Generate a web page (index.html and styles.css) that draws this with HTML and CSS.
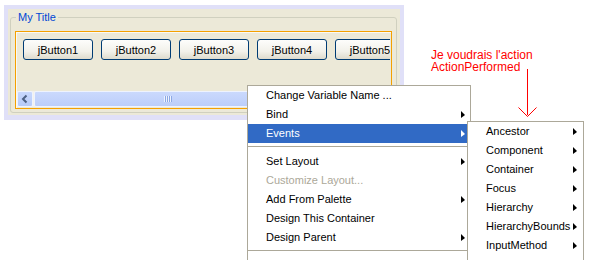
FILE: index.html
```html
<!DOCTYPE html>
<html lang="fr">
  <head>
    <meta charset="UTF-8" />
    <title>Events</title>
    <link rel="stylesheet" href="styles.css">
  </head>
  <body>
    <div class="frame">
      <fieldset class="group">
        <legend>My Title</legend>
        <div class="pane">
          <div class="buttons">
            <button>jButton1</button>
            <button>jButton2</button>
            <button>jButton3</button>
            <button>jButton4</button>
            <button>jButton5</button>
          </div>
          <div class="hscroll">
            <span class="arrow-btn">
              <svg width="14" height="14" viewBox="0 0 14 14"><path d="M8.5 3.5 L5 7 L8.5 10.5" fill="none" stroke="#4d6185" stroke-width="2"/></svg>
            </span>
            <span class="thumb"><span class="grip"></span></span>
          </div>
        </div>
      </fieldset>
    </div>

    <ul class="menu">
      <li>Change Variable Name ...</li>
      <li class="sub">Bind</li>
      <li class="sub active">Events</li>
      <li class="sep"></li>
      <li class="sub">Set Layout</li>
      <li class="disabled">Customize Layout...</li>
      <li class="sub">Add From Palette</li>
      <li>Design This Container</li>
      <li class="sub">Design Parent</li>
      <li class="sep"></li>
    </ul>

    <ul class="menu submenu">
      <li class="sub">Ancestor</li>
      <li class="sub">Component</li>
      <li class="sub">Container</li>
      <li class="sub">Focus</li>
      <li class="sub">Hierarchy</li>
      <li class="sub">HierarchyBounds</li>
      <li class="sub">InputMethod</li>
    </ul>

    <div class="note">
      <p>Je voudrais l'action</p>
      <p>ActionPerformed</p>
    </div>
    <svg class="note-arrow" width="26" height="56" viewBox="0 0 26 56">
      <path d="M12.5 3 V49 M3.5 41.5 L12.5 50.5 L21.5 41.5" fill="none" stroke="#ff0000" stroke-width="1"/>
    </svg>
  </body>
</html>
```

FILE: styles.css
```css
* {
  margin: 0;
  padding: 0;
  box-sizing: border-box;
}
html {
  overflow: hidden;
}
body {
  background: #fff;
  font-family: "Liberation Sans", Arial, sans-serif;
  font-size: 11px;
  width: 590px;
  height: 260px;
  overflow: hidden;
  position: relative;
}
.frame {
  margin: 5px 0 0 4px;
  width: 400px;
  height: 115px;
  background: #ece9d8;
  border: 4px solid #e0e0f8;
  border-bottom-width: 5px;
  padding: 2px 0 0 2px;
}
.group {
  width: 387px;
  height: 102px;
  border: 1px solid #d0d0bf;
  border-radius: 3px;
  padding: 0 4px 0 4px;
}
.group legend {
  color: #0046d5;
  margin-left: 1px;
  padding: 0 2px;
  line-height: 13px;
}
.pane {
  margin-top: 7px;
  width: 377px;
  height: 78px;
  border: 1px solid #f4a000;
  box-shadow: inset 1px 1px 0 #fbfaf4;
  padding: 7px 1px 1px 1px;
  display: flex;
  flex-direction: column;
  justify-content: space-between;
}
.buttons {
  display: flex;
  gap: 8px;
  padding-left: 6px;
  overflow: hidden;
}
.buttons button {
  flex: none;
  width: 70px;
  height: 21px;
  border: 1px solid #003c74;
  border-radius: 3px;
  background: linear-gradient(#fdfdfb, #f2f1ea 60%, #dedbcd);
  font-family: "Liberation Sans", Arial, sans-serif;
  font-size: 11px;
  color: #000;
}
.hscroll {
  height: 16px;
  display: flex;
  background: #f3f1ec;
}
.arrow-btn {
  width: 16px;
  height: 16px;
  background: linear-gradient(#c8d8fd, #b7cbf9);
  border: 1px solid #eef3fe;
  border-radius: 2px;
  display: flex;
  align-items: center;
  justify-content: center;
}
.thumb {
  width: 268px;
  height: 16px;
  margin-left: 1px;
  background: linear-gradient(#cad9fd, #bccefa);
  border: 1px solid #eef3fe;
  border-radius: 2px;
  display: flex;
  align-items: center;
  justify-content: center;
}
.grip {
  width: 8px;
  height: 6px;
  background: repeating-linear-gradient(90deg, #eef3fe 0 1px, #8ca8e4 1px 2px);
}
.menu {
  list-style: none;
  position: absolute;
  left: 247px;
  top: 85px;
  width: 224px;
  height: 175px;
  background: #fff;
  border: 1px solid #aca899;
  border-bottom: none;
  z-index: 2;
}
.menu li {
  height: 19px;
  line-height: 19px;
  padding-left: 18px;
  color: #000;
  position: relative;
}
.menu li.sub::after {
  content: "";
  position: absolute;
  right: 5px;
  top: 6px;
  border-left: 4px solid #000;
  border-top: 4px solid transparent;
  border-bottom: 3px solid transparent;
}
.menu li.active {
  background: #316ac5;
  color: #fff;
}
.menu li.active::after {
  border-left-color: #fff;
}
.menu li.disabled {
  color: #aca899;
}
.menu li.sep {
  padding: 0;
  border-top: 1px solid #aca899;
  margin-top: 3px;
  height: 6px;
}
.submenu {
  left: 467px;
  top: 121px;
  width: 117px;
  height: 139px;
  z-index: 3;
}
.submenu li.sub::after {
  right: 6px;
}
.note {
  position: absolute;
  left: 431px;
  top: 50px;
  font-family: "Liberation Sans", Arial, sans-serif;
  font-size: 12px;
  line-height: 11px;
  color: #ff0000;
  display: flex;
  flex-direction: column;
  gap: 1px;
}
.note-arrow {
  position: absolute;
  left: 515px;
  top: 66px;
}
```
